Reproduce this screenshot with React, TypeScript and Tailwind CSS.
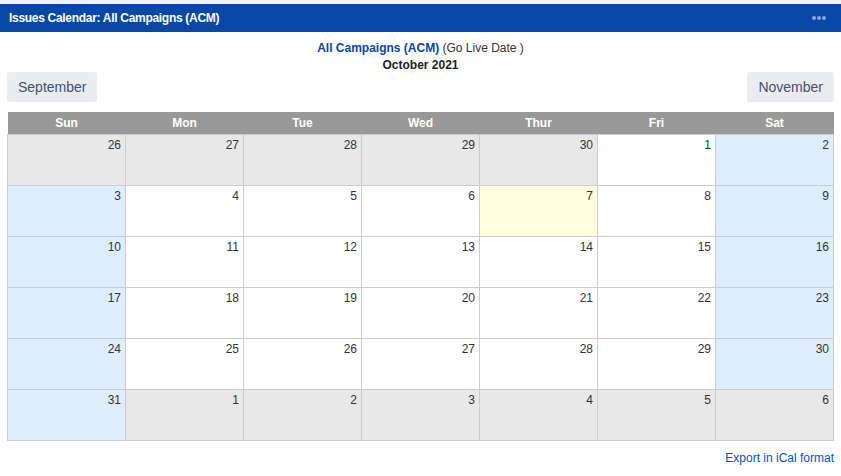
const weekDays = ["Sun", "Mon", "Tue", "Wed", "Thur", "Fri", "Sat"];

type Day = {
  n: number;
  kind: "other" | "weekend" | "today" | "normal";
};

const buildWeeks = (): Day[][] => {
  const cells: Day[] = [];
  [26, 27, 28, 29, 30].forEach((n) => cells.push({ n, kind: "other" }));
  for (let n = 1; n <= 31; n++) {
    const col = cells.length % 7;
    let kind: Day["kind"] = "normal";
    if (col === 0 || col === 6) kind = "weekend";
    if (n === 7) kind = "today";
    cells.push({ n, kind });
  }
  [1, 2, 3, 4, 5, 6].forEach((n) => cells.push({ n, kind: "other" }));
  const weeks: Day[][] = [];
  for (let i = 0; i < cells.length; i += 7) weeks.push(cells.slice(i, i + 7));
  return weeks;
};

const cellBg: Record<Day["kind"], string> = {
  other: "bg-[#e8e8e8]",
  weekend: "bg-[#dfeefe]",
  today: "bg-[#ffffdc]",
  normal: "bg-white",
};

export default function App() {
  const weeks = buildWeeks();

  return (
    <div className="min-h-[476px] w-[841px] bg-white font-['Liberation_Sans',Arial,sans-serif] text-[12px] text-[#333]">
      <div className="h-1 bg-[#f1f2f4]" />

      <div className="flex h-7 items-center justify-between bg-[#0747a6] pl-[9px] pr-[15px]">
        <span className="text-[12px] font-bold tracking-[-0.3px] text-white">
          Issues Calendar: All Campaigns (ACM)
        </span>
        <span className="flex gap-[1px]">
          <span className="h-[4px] w-[4px] rounded-full bg-[#8ea6d1]" />
          <span className="h-[4px] w-[4px] rounded-full bg-[#8ea6d1]" />
          <span className="h-[4px] w-[4px] rounded-full bg-[#8ea6d1]" />
        </span>
      </div>

      <div className="px-[7px]">
        <div className="pt-[8px] text-center leading-[17px]">
          <div>
            <span className="font-bold text-[#0747a6]">All Campaigns (ACM)</span>{" "}
            <span className="text-[#333]">(Go Live Date )</span>
          </div>
          <div className="font-bold text-[#222]">October 2021</div>
        </div>

        <div className="-mt-[2px] flex justify-between">
          <button
            type="button"
            className="h-[30px] rounded-[3px] bg-[#ebecf0] px-[11px] text-[14px] text-[#42526e]"
          >
            September
          </button>
          <button
            type="button"
            className="h-[30px] rounded-[3px] bg-[#ebecf0] px-[11px] text-[14px] text-[#42526e]"
          >
            November
          </button>
        </div>

        <table className="mt-[10px] w-[827px] table-fixed border-collapse">
          <thead>
            <tr className="h-[22px] bg-[#999]">
              {weekDays.map((d) => (
                <th key={d} className="p-0 text-center text-[12px] font-bold text-white">
                  {d}
                </th>
              ))}
            </tr>
          </thead>
          <tbody>
            {weeks.map((week, wi) => (
              <tr key={wi} className="h-[51px]">
                {week.map((day, di) => (
                  <td
                    key={di}
                    className={`border border-[#ccc] px-[4px] pt-[1px] align-top text-right text-[12px] text-[#333] ${cellBg[day.kind]}`}
                  >
                    {day.n}
                  </td>
                ))}
              </tr>
            ))}
          </tbody>
        </table>

        <div className="mt-[8px] text-right">
          <a href="#" className="text-[12px] text-[#0052cc]">
            Export in iCal format
          </a>
        </div>
      </div>
    </div>
  );
}
